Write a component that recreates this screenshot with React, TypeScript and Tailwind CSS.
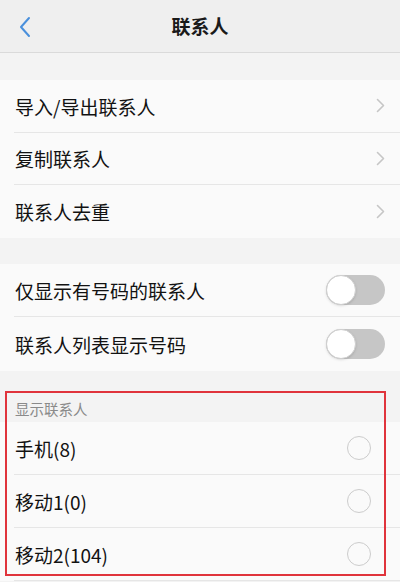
const font = { fontFamily: '"Noto Sans CJK SC", "Noto Sans", sans-serif' };

function Chevron() {
  return (
    <svg width="9" height="15" viewBox="0 0 9 15" fill="none">
      <path d="M1.5 1.5 L7.5 7.5 L1.5 13.5" stroke="#c6c6c6" strokeWidth="1.6" strokeLinecap="round" strokeLinejoin="round" />
    </svg>
  );
}

function Toggle() {
  return (
    <div className="w-[59px] h-[30px] rounded-full bg-[#c6c6c6] flex items-center">
      <div className="w-[30px] h-[30px] rounded-full bg-white border border-[#cfcfcf] shadow-sm" />
    </div>
  );
}

function Row({ label, right, last, pr, h }: { label: string; right: React.ReactNode; last?: boolean; pr: string; h: string }) {
  return (
    <div className="bg-[#fafafa] pl-[14px]">
      <div className={`${h} flex items-center justify-between ${pr} ${last ? '' : 'border-b border-[#e6e6e6]'}`}>
        <span className="text-[19px] text-[#121212] pl-px pt-[2px]">{label}</span>
        {right}
      </div>
    </div>
  );
}

export default function App() {
  const navItems = ['导入/导出联系人', '复制联系人', '联系人去重'];
  const toggles = ['仅显示有号码的联系人', '联系人列表显示号码'];
  const accounts = ['手机(8)', '移动1(0)', '移动2(104)'];

  return (
    <div className="relative w-[400px] h-[582px] overflow-hidden bg-[#f3f3f3]" style={font}>
      <div className="h-[53px] bg-[#efefef] border-b border-[#dadada] flex items-center justify-center relative">
        <svg className="absolute left-[18px] top-[16px]" width="14" height="22" viewBox="0 0 14 22" fill="none">
          <path d="M11 2 L3 11 L11 20" stroke="#4a90dc" strokeWidth="2" strokeLinecap="round" strokeLinejoin="round" />
        </svg>
        <span className="text-[19px] font-bold text-[#1a1a1a]">联系人</span>
      </div>

      <div className="h-[27px]" />
      <div>
        {navItems.map((item, i) => (
          <Row key={item} label={item} h="h-[52.5px]" pr="pr-[15px]" last={i === navItems.length - 1} right={<Chevron />} />
        ))}
      </div>

      <div className="h-[26px]" />
      <div>
        {toggles.map((item, i) => (
          <Row key={item} label={item} h="h-[53.5px]" pr="pr-[15px]" last={i === toggles.length - 1} right={<Toggle />} />
        ))}
      </div>

      <div className="h-[51.5px] flex items-end pl-[15px] pb-[3px]">
        <span className="text-[14.5px] leading-[20px] text-[#8a8a8a]">显示联系人</span>
      </div>
      <div>
        {accounts.map((item) => (
          <Row
            key={item}
            label={item}
            h="h-[53px]"
            pr="pr-[29px]"
            right={<div className="w-[24px] h-[24px] rounded-full border-[1.5px] border-[#cccccc]" />}
          />
        ))}
      </div>

      <div className="absolute left-[5px] top-[391px] w-[381px] h-[185px] border-2 border-[#e0343c] pointer-events-none" />
    </div>
  );
}
